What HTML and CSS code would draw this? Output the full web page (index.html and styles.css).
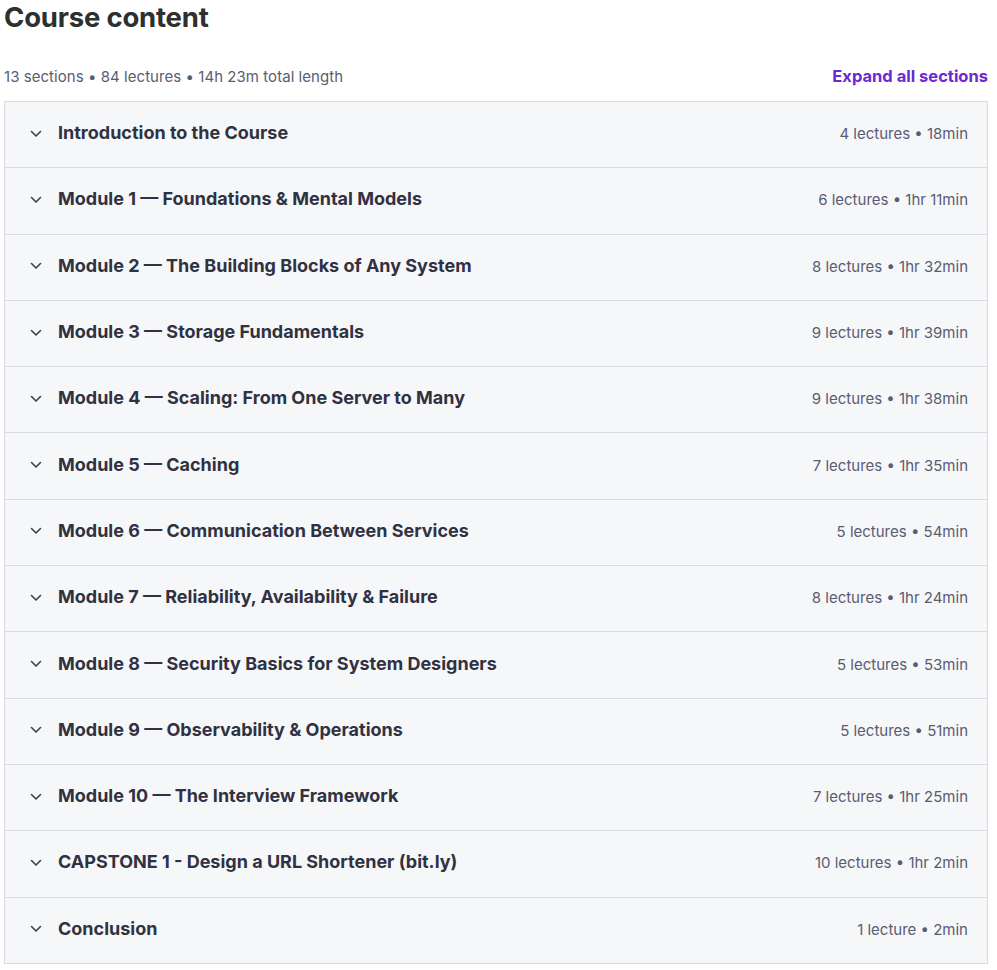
FILE: index.html
```html
<!DOCTYPE html>
<html>
<head>
<meta charset="utf-8">
<link rel="stylesheet" href="styles.css">
</head>
<body>
<div class="page">
  <h2 class="title">Course content</h2>
  <div class="summary">
    <span class="summary-text">13 sections • 84 lectures • 14h 23m total length</span>
    <button class="expand">Expand all sections</button>
  </div>
  <div class="sections">
    <div class="row"><svg class="chev" viewBox="0 0 12 8"><path d="M1.5 1.5l4.5 4.5 4.5-4.5"/></svg><span class="row-title">Introduction to the Course</span><span class="row-meta">4 lectures • 18min</span></div>
    <div class="row"><svg class="chev" viewBox="0 0 12 8"><path d="M1.5 1.5l4.5 4.5 4.5-4.5"/></svg><span class="row-title">Module 1 — Foundations &amp; Mental Models</span><span class="row-meta">6 lectures • 1hr 11min</span></div>
    <div class="row"><svg class="chev" viewBox="0 0 12 8"><path d="M1.5 1.5l4.5 4.5 4.5-4.5"/></svg><span class="row-title">Module 2 — The Building Blocks of Any System</span><span class="row-meta">8 lectures • 1hr 32min</span></div>
    <div class="row"><svg class="chev" viewBox="0 0 12 8"><path d="M1.5 1.5l4.5 4.5 4.5-4.5"/></svg><span class="row-title">Module 3 — Storage Fundamentals</span><span class="row-meta">9 lectures • 1hr 39min</span></div>
    <div class="row"><svg class="chev" viewBox="0 0 12 8"><path d="M1.5 1.5l4.5 4.5 4.5-4.5"/></svg><span class="row-title">Module 4 — Scaling: From One Server to Many</span><span class="row-meta">9 lectures • 1hr 38min</span></div>
    <div class="row"><svg class="chev" viewBox="0 0 12 8"><path d="M1.5 1.5l4.5 4.5 4.5-4.5"/></svg><span class="row-title">Module 5 — Caching</span><span class="row-meta">7 lectures • 1hr 35min</span></div>
    <div class="row"><svg class="chev" viewBox="0 0 12 8"><path d="M1.5 1.5l4.5 4.5 4.5-4.5"/></svg><span class="row-title">Module 6 — Communication Between Services</span><span class="row-meta">5 lectures • 54min</span></div>
    <div class="row"><svg class="chev" viewBox="0 0 12 8"><path d="M1.5 1.5l4.5 4.5 4.5-4.5"/></svg><span class="row-title">Module 7 — Reliability, Availability &amp; Failure</span><span class="row-meta">8 lectures • 1hr 24min</span></div>
    <div class="row"><svg class="chev" viewBox="0 0 12 8"><path d="M1.5 1.5l4.5 4.5 4.5-4.5"/></svg><span class="row-title">Module 8 — Security Basics for System Designers</span><span class="row-meta">5 lectures • 53min</span></div>
    <div class="row"><svg class="chev" viewBox="0 0 12 8"><path d="M1.5 1.5l4.5 4.5 4.5-4.5"/></svg><span class="row-title">Module 9 — Observability &amp; Operations</span><span class="row-meta">5 lectures • 51min</span></div>
    <div class="row"><svg class="chev" viewBox="0 0 12 8"><path d="M1.5 1.5l4.5 4.5 4.5-4.5"/></svg><span class="row-title">Module 10 — The Interview Framework</span><span class="row-meta">7 lectures • 1hr 25min</span></div>
    <div class="row"><svg class="chev" viewBox="0 0 12 8"><path d="M1.5 1.5l4.5 4.5 4.5-4.5"/></svg><span class="row-title">CAPSTONE 1 - Design a URL Shortener (bit.ly)</span><span class="row-meta">10 lectures • 1hr 2min</span></div>
    <div class="row"><svg class="chev" viewBox="0 0 12 8"><path d="M1.5 1.5l4.5 4.5 4.5-4.5"/></svg><span class="row-title">Conclusion</span><span class="row-meta">1 lecture • 2min</span></div>
  </div>
</div>
</body>
</html>
```

FILE: styles.css
```css
* { box-sizing: border-box; }
html, body { margin: 0; padding: 0; background: #ffffff; }
body { font-family: Inter, "Noto Sans", sans-serif; color: #2d2f31; }
.page { width: 984px; margin-left: 4px; }
.title {
  margin: 0;
  font-size: 27.5px;
  line-height: 34px;
  font-weight: 700;
  color: #2d2f31;
  letter-spacing: -0.2px;
}
.summary {
  display: flex;
  justify-content: space-between;
  align-items: center;
  margin-top: 32px;
  height: 20px;
  margin-bottom: 15px;
}
.summary-text { font-size: 15px; color: #595c73; letter-spacing: 0.05px; }
.expand {
  border: 0; background: none; padding: 0; margin: 0;
  font-family: inherit; font-size: 16.5px; font-weight: 700; color: #6d28d2;
}
.sections { border: 1px solid #d8d9e2; border-bottom: 0; }
.row {
  display: flex;
  align-items: center;
  height: 66.3px;
  background: #f6f7f9;
  border-bottom: 1px solid #d8d9e2;
  padding: 0 19px 0 25px;
}
.chev {
  width: 12px; height: 8px; flex: none;
  fill: none; stroke: #3e4143; stroke-width: 1.6; stroke-linecap: round; stroke-linejoin: round;
  margin-right: 16px;
  margin-top: -2px;
}
.row-title { flex: 1; font-size: 18px; font-weight: 700; color: #303141; margin-top: -4px; }
.row-meta { font-size: 15px; color: #595c73; margin-top: -2px; }
```
